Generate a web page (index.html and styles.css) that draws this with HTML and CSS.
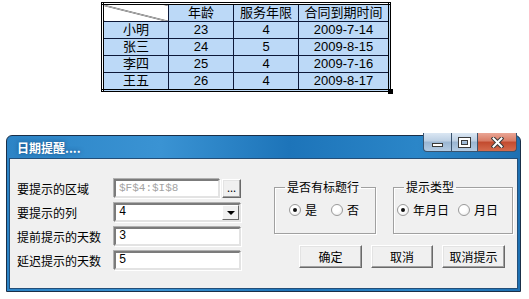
FILE: index.html
```html
<!DOCTYPE html>
<html lang="zh-CN">
<head>
    <meta charset="UTF-8">
    <title>日期提醒</title>
    <link rel="stylesheet" href="styles.css">
</head>
<body>
    <div class="sheet">
        <table class="grid">
            <tr><th class="corner"></th><th>年龄</th><th>服务年限</th><th class="wide">合同到期时间</th></tr>
            <tr><td>小明</td><td>23</td><td>4</td><td>2009-7-14</td></tr>
            <tr><td>张三</td><td>24</td><td>5</td><td>2009-8-15</td></tr>
            <tr><td>李四</td><td>25</td><td>4</td><td>2009-7-16</td></tr>
            <tr><td>王五</td><td>26</td><td>4</td><td>2009-8-17</td></tr>
        </table>
        <span class="handle"></span>
    </div>

    <div class="window">
        <div class="titlebar">
            <span class="title">日期提醒....</span>
            <div class="caption">
                <span class="cap cap-min"><span class="ico-min"></span></span>
                <span class="cap cap-max"><span class="ico-max"></span></span>
                <span class="cap cap-close">
                    <svg width="13" height="11" viewBox="0 0 13 11">
                        <path d="M2.5 1.5 L10.5 9.5 M10.5 1.5 L2.5 9.5" stroke="#3a3a3a" stroke-width="4" stroke-linecap="square"/>
                        <path d="M2.5 1.5 L10.5 9.5 M10.5 1.5 L2.5 9.5" stroke="#fff" stroke-width="2" stroke-linecap="square"/>
                    </svg>
                </span>
            </div>
        </div>

        <div class="client">
            <div class="form">
                <div class="row">
                    <label>要提示的区域</label>
                    <span class="field field-range disabled">$F$4:$I$8</span>
                    <span class="btn btn-dots">...</span>
                </div>
                <div class="row">
                    <label>要提示的列</label>
                    <span class="field combo">4<span class="combo-arrow"><span class="tri"></span></span></span>
                </div>
                <div class="row">
                    <label>提前提示的天数</label>
                    <span class="field">3</span>
                </div>
                <div class="row">
                    <label>延迟提示的天数</label>
                    <span class="field">5</span>
                </div>
            </div>

            <div class="side">
                <div class="groups">
                    <fieldset class="group group-title">
                        <legend>是否有标题行</legend>
                        <div class="options">
                            <span class="opt"><span class="radio checked"></span>是</span>
                            <span class="opt"><span class="radio"></span>否</span>
                        </div>
                    </fieldset>
                    <fieldset class="group group-type">
                        <legend>提示类型</legend>
                        <div class="options">
                            <span class="opt"><span class="radio checked"></span>年月日</span>
                            <span class="opt"><span class="radio"></span>月日</span>
                        </div>
                    </fieldset>
                </div>
                <div class="actions">
                    <span class="btn btn-ok">确定</span>
                    <span class="btn btn-cancel">取消</span>
                    <span class="btn btn-ok">取消提示</span>
                </div>
            </div>
        </div>
    </div>
</body>
</html>
```

FILE: styles.css
```css
body {
    margin: 0;
    background-color: #fff;
    font-family: "Noto Sans CJK SC", sans-serif;
    font-size: 12px;
    color: #000;
}

/* spreadsheet range */
.sheet {
    position: relative;
    display: inline-block;
    margin: 2px 0 0 101px;
}

.grid {
    border-collapse: collapse;
    border: 3px double #000;
    font-family: "Liberation Sans", "Noto Sans CJK SC", sans-serif;
    font-size: 13px;
}

.grid th,
.grid td {
    border: 1px solid #0d1838;
    background-color: #bcd9f7;
    height: 16px;
    width: 64px;
    padding: 0;
    line-height: 16px;
    text-align: center;
    font-weight: normal;
}

.grid .wide {
    width: 89px;
}

.grid .corner {
    background: linear-gradient(to bottom left, #fff calc(50% - 0.7px), #000 50%, #fff calc(50% + 0.7px));
}

.handle {
    position: absolute;
    right: -2px;
    bottom: -2px;
    width: 5px;
    height: 5px;
    background-color: #000;
}

/* dialog window */
.window {
    margin: 40px 0 0 6px;
    width: 515px;
    height: 157px;
    box-sizing: border-box;
    border: 1px solid #1a2f48;
    border-radius: 6px 6px 0 0;
    padding: 0 2px 2px;
    background: linear-gradient(to right, #2c84c6, #3a93d3 30%, #1d74b9 55%, #2b86c8 80%, #1e70b2);
    display: flex;
    flex-direction: column;
}

.titlebar {
    height: 22px;
    display: flex;
    align-items: center;
    padding-left: 8px;
    color: #fff;
    font-weight: bold;
    font-size: 12px;
}

.title {
    text-shadow: 0 0 4px rgba(0, 20, 60, 0.5);
}

.caption {
    margin-left: auto;
    margin-right: 1px;
    margin-top: -3px;
    align-self: flex-start;
    display: flex;
}

.cap {
    height: 19px;
    box-sizing: border-box;
    border: 1px solid #3a536e;
    border-top: none;
    border-left: none;
    display: flex;
    align-items: center;
    justify-content: center;
    background: linear-gradient(#dbe7f3, #bccfe3 45%, #9ab5d2 50%, #b3cbe3);
}

.cap-min {
    width: 29px;
    border-left: 1px solid #3a536e;
    border-bottom-left-radius: 4px;
}

.cap-max {
    width: 26px;
}

.cap-close {
    width: 39px;
    border-bottom-right-radius: 4px;
    background: linear-gradient(#eaa595, #d77b64 45%, #c24a2e 50%, #d46b4d);
}

.ico-min {
    width: 9px;
    height: 2px;
    margin-top: 5px;
    background-color: #fff;
    border: 1px solid #3a3a3a;
}

.ico-max {
    width: 7px;
    height: 5px;
    border: 2px solid #fff;
    box-shadow: 0 0 0 1px #3a3a3a, inset 0 0 0 1px #3a3a3a;
}

.client {
    flex: 1;
    background-color: #f0f0f0;
    border: 1px solid #234e78;
    display: flex;
    padding: 20px 0 0 7px;
}

/* left form */
.form {
    display: flex;
    flex-direction: column;
    gap: 5px;
}

.row {
    display: flex;
    align-items: center;
    height: 19px;
}

.row label {
    width: 97px;
}

.field {
    box-sizing: border-box;
    width: 127px;
    height: 19px;
    padding: 0 3px;
    line-height: 15px;
    background-color: #fff;
    border: 2px solid;
    border-color: #7b7b7b #e3e3e3 #e3e3e3 #7b7b7b;
    box-shadow: -1px -1px 0 #b0b0b0, 1px 1px 0 #fff;
    font-family: "Liberation Mono", "Noto Sans CJK SC", monospace;
    font-size: 12px;
}

.field-range {
    width: 106px;
}

.disabled {
    color: #a3a3a3;
    font-size: 11px;
}

.combo {
    display: flex;
    justify-content: space-between;
    padding-right: 0;
}

.combo-arrow {
    width: 17px;
    height: 15px;
    box-sizing: border-box;
    border: 1px solid;
    border-color: #fff #696969 #696969 #fff;
    background-color: #f0f0f0;
    display: flex;
    align-items: center;
    justify-content: center;
}

.tri {
    width: 0;
    height: 0;
    border-left: 4px solid transparent;
    border-right: 4px solid transparent;
    border-top: 4px solid #000;
}

.btn {
    box-sizing: border-box;
    display: flex;
    align-items: center;
    justify-content: center;
    background-color: #f0f0f0;
    border: 1px solid;
    border-color: #fff #696969 #696969 #fff;
    box-shadow: inset -1px -1px 0 #a0a0a0, inset 1px 1px 0 #e3e3e3;
}

.btn-dots {
    width: 19px;
    height: 19px;
    margin-left: 2px;
    padding-bottom: 4px;
    font-size: 11px;
}

/* right side */
.side {
    margin-left: 33px;
    margin-top: 1px;
    display: flex;
    flex-direction: column;
}

.groups {
    display: flex;
    gap: 17px;
}

.group {
    margin: 0;
    padding: 9px 0 17px;
    border: 1px solid #a0a0a0;
    box-shadow: inset 1px 1px 0 #fff, 1px 1px 0 #fff;
}

.group legend {
    margin-left: 10px;
    padding: 0 2px;
    line-height: 14px;
}

.group-title {
    width: 102px;
    box-sizing: border-box;
}

.group-type {
    width: 120px;
    box-sizing: border-box;
}

.options {
    display: flex;
    align-items: center;
    height: 13px;
}

.group-title .options {
    padding-left: 14px;
    gap: 14px;
}

.group-type .options {
    padding-left: 3px;
    gap: 9px;
}

.opt {
    display: inline-flex;
    align-items: center;
    gap: 4px;
}

.radio {
    width: 12px;
    height: 12px;
    box-sizing: border-box;
    border-radius: 50%;
    border: 1px solid #9a9a9a;
    background: radial-gradient(circle at 40% 40%, #fff 40%, #e2e2e2);
    display: inline-flex;
    align-items: center;
    justify-content: center;
}

.radio.checked::after {
    content: "";
    width: 4px;
    height: 4px;
    border-radius: 50%;
    background-color: #111;
}

.actions {
    display: flex;
    gap: 9px;
    margin: 11px 0 0 25px;
}

.actions .btn {
    width: 63px;
    height: 23px;
}

.actions .btn-cancel {
    width: 62px;
}
```
